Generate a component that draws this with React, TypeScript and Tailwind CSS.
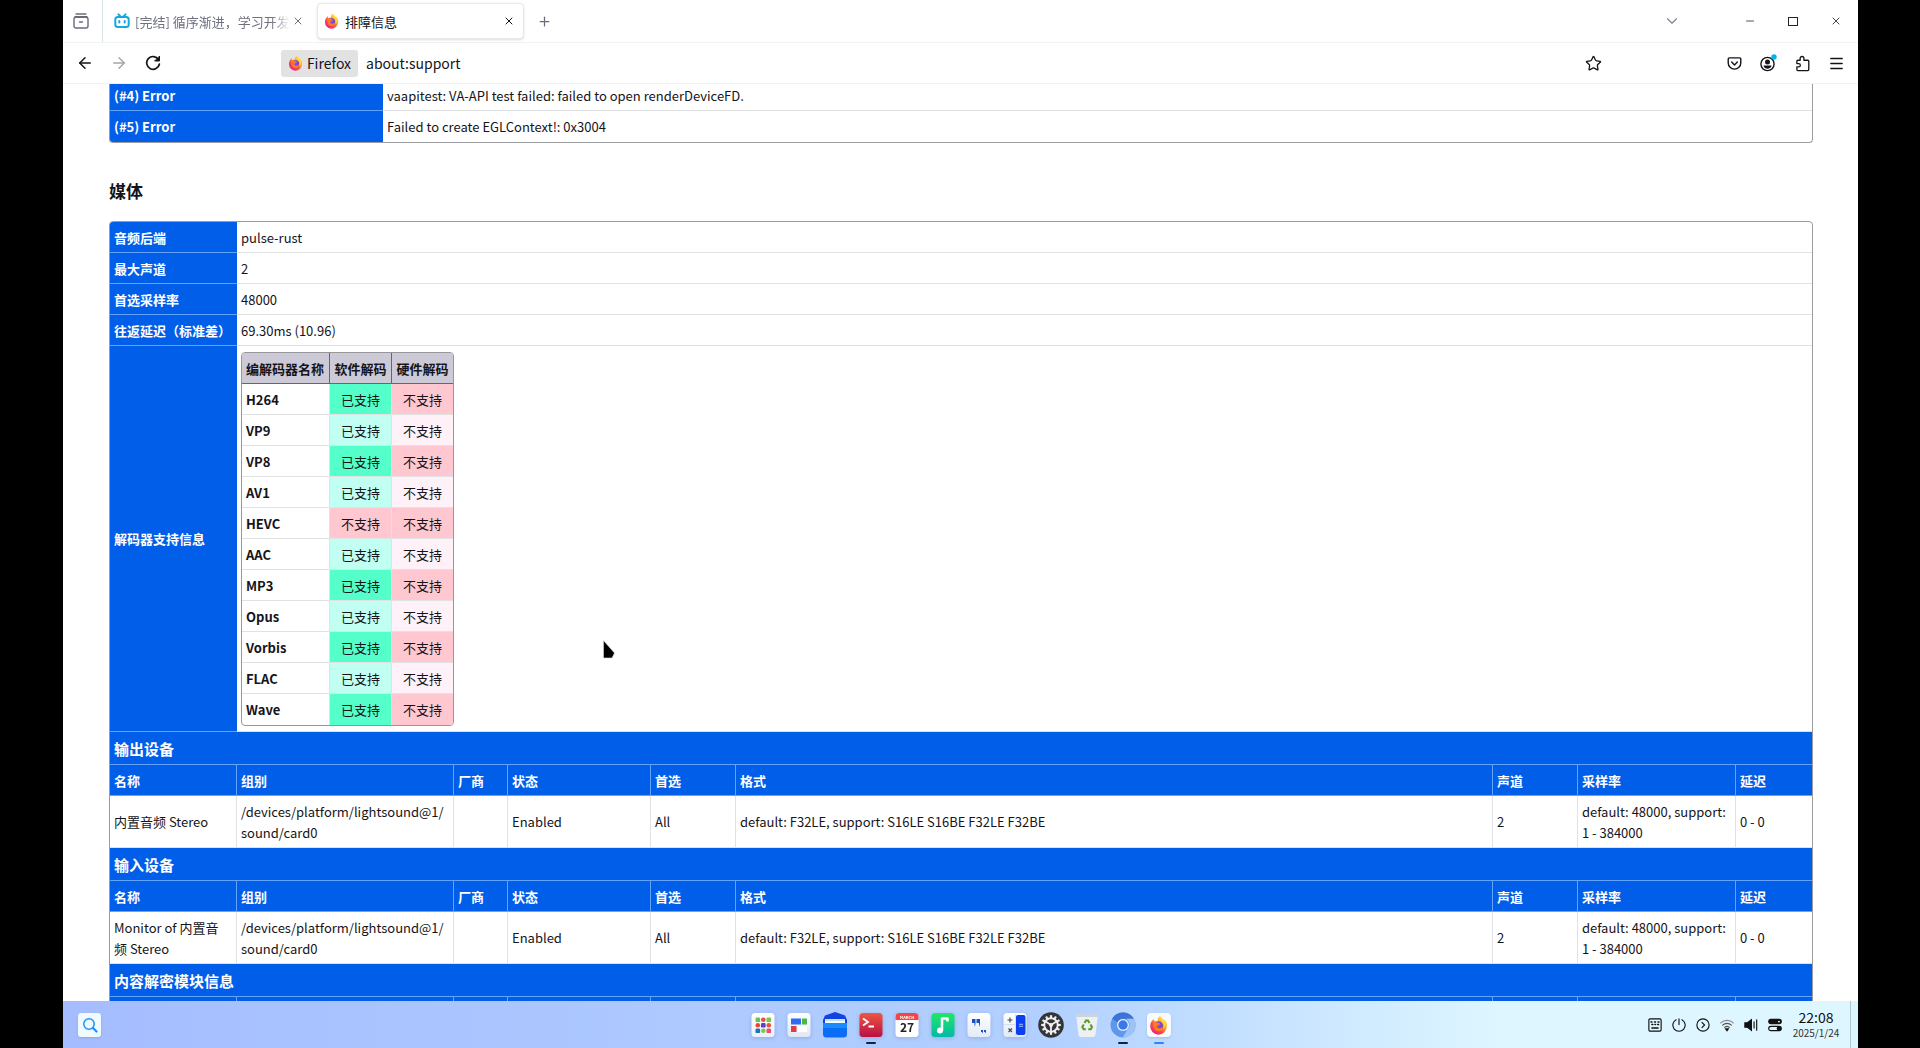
import React from "react";
import { ArrowLeft, ArrowRight, X, Plus, ChevronDown, Minus, Star, Menu } from "lucide-react";

type IconProps = { className?: string };

function FirefoxIcon({ className }: IconProps) {
  return (
    <svg viewBox="0 0 32 32" className={className} preserveAspectRatio="none" aria-hidden="true">
      <defs>
        <linearGradient id="ff-body" x1="0.85" y1="0.1" x2="0.2" y2="0.95">
          <stop offset="0" stopColor="#fff24a" />
          <stop offset="0.35" stopColor="#ffa72b" />
          <stop offset="0.65" stopColor="#ff4a45" />
          <stop offset="1" stopColor="#e8208a" />
        </linearGradient>
        <radialGradient id="ff-core" cx="0.5" cy="0.4" r="0.6">
          <stop offset="0" stopColor="#9059ff" />
          <stop offset="1" stopColor="#592acb" />
        </radialGradient>
      </defs>
      <path
        d="M30 13c-1-3-2.600-5-4.500-6.500 1 2 1.300 3.500 1.400 4.500C24.500 6 20.500 5.500 19 1c-3 2-4.500 5-4.600 8-2 .1-3.400.8-4.800 1.800C8.500 10 8.400 7.500 8.700 6.500 5.500 8 2 12 2 18a14 13.500 0 0 0 28 0c.2-1.800.3-3.500 0-5z"
        fill="url(#ff-body)"
      />
      <circle cx="16.500" cy="17.500" r="7" fill="url(#ff-core)" />
      <path d="M7 11c3-1.500 6 0 7.500 1.500 2 0 3.500.2 4 1.500-.5 1.800-4.500 1.800-5 4-.3 2 2.500 4 5.500 3 2-.7 3-2 3.500-3.500C24 23 20 27 15 26 9 25 6 19 7 11z" fill="#ff7a26" />
      <path d="M20 9c5 3 6.500 8 4 13 4-3 5-8 3-12-2-3-5-4-7-7z" fill="#ffd93b" />
    </svg>
  );
}

function BilibiliIcon() {
  return (
    <svg viewBox="0 0 16 16" className="h-4 w-4 shrink-0" fill="none" stroke="#12a8e0" strokeWidth="2" strokeLinecap="round" aria-hidden="true">
      <rect x="1.300" y="4" width="13.400" height="10" rx="2.500" />
      <path d="M4.500 1.300 6.500 3.500M11.500 1.300 9.500 3.500M5.300 8v1.600M10.700 8v1.600" />
    </svg>
  );
}

function TabListIcon() {
  return (
    <svg viewBox="0 0 16 16" className="h-4 w-4" fill="none" stroke="#6b6b7d" strokeWidth="1.400" strokeLinecap="round" aria-hidden="true">
      <path d="M3 1h10M2 3.800h12" />
      <rect x="1" y="4.200" width="14" height="10.800" rx="2" />
      <path d="M6.500 9h3" />
    </svg>
  );
}

function ReloadIcon() {
  return (
    <svg viewBox="0 0 16 16" className="h-4 w-4" fill="none" stroke="currentColor" strokeWidth="1.700" strokeLinecap="round" aria-hidden="true">
      <path d="M13.500 4.500A6.400 6.400 0 1 0 14.400 9" />
      <path d="M14.500 1.500v4.500H10z" fill="currentColor" strokeWidth="1" strokeLinejoin="round" />
    </svg>
  );
}

function PocketIcon() {
  return (
    <svg viewBox="0 0 16 16" className="h-[15px] w-[15px]" fill="none" stroke="currentColor" strokeWidth="1.500" strokeLinecap="round" strokeLinejoin="round" aria-hidden="true">
      <path d="M2.500 2h11a1.200 1.200 0 0 1 1.200 1.200V7.500a6.700 6.500 0 0 1-13.400 0V3.200A1.200 1.200 0 0 1 2.500 2z" />
      <path d="m5 6.500 3 3 3-3" />
    </svg>
  );
}

function AccountIcon() {
  return (
    <svg viewBox="0 0 18 18" className="h-[18px] w-[18px]" aria-hidden="true">
      <circle cx="8.500" cy="10" r="6.600" fill="none" stroke="#15141a" strokeWidth="1.400" />
      <circle cx="8.500" cy="8" r="2.500" fill="#15141a" />
      <path d="M4.500 11.500h8c0 2-2 3.200-4 3.200s-4-1.200-4-3.200z" fill="#15141a" />
      <circle cx="15" cy="3" r="2.700" fill="#00b3f4" />
    </svg>
  );
}

function ExtensionIcon() {
  return (
    <svg viewBox="0 0 16 18" className="h-[17px] w-[15px]" fill="none" stroke="currentColor" strokeWidth="1.400" strokeLinejoin="round" aria-hidden="true">
      <path d="M5.500 5.500V3.500a2 2 0 0 1 4 0v2h4.200a1 1 0 0 1 1 1V15.500a1 1 0 0 1-1 1H3a1 1 0 0 1-1-1v-3h2a1.700 1.700 0 0 0 0-3.400H2V6.500a1 1 0 0 1 1-1z" />
    </svg>
  );
}

function IconButton({ label, className = "", children }: { label: string; className?: string; children: React.ReactNode }) {
  return (
    <button type="button" aria-label={label} className={`flex h-7 shrink-0 items-center justify-center ${className}`}>
      {children}
    </button>
  );
}

function TabBar() {
  return (
    <header className="flex h-[43px] shrink-0 items-center border-b border-[#f0f2f3]">
      <div className="flex h-full w-10 items-center border-r border-[#d8e4e8] pl-[10px]">
        <IconButton label="标签页列表" className="w-4">
          <TabListIcon />
        </IconButton>
      </div>
      <div className="flex w-[214px] items-center pl-[11px] text-[#6f7080]">
        <button type="button" className="flex min-w-0 items-center gap-[5px]">
          <BilibiliIcon />
          <span className="w-[155px] overflow-hidden whitespace-nowrap text-left [mask-image:linear-gradient(to_right,black_88%,transparent)]">
            [完结] 循序渐进，学习开发
          </span>
        </button>
        <IconButton label="关闭标签页" className="w-4">
          <X className="h-3 w-3" strokeWidth={2} />
        </IconButton>
      </div>
      <div className="flex h-9 w-[207px] items-center justify-between rounded border border-[#e7e8ea] bg-white pl-[6px] pr-1 shadow-sm">
        <button type="button" className="flex items-center gap-[6px]">
          <FirefoxIcon className="h-4 w-[15px]" />
          <span className="text-[#15141a]">排障信息</span>
        </button>
        <IconButton label="关闭当前标签页" className="w-5">
          <X className="h-3 w-3" strokeWidth={2} />
        </IconButton>
      </div>
      <IconButton label="新建标签页" className="ml-[10px] w-5 text-[#6b6b7d]">
        <Plus className="h-[15px] w-[15px]" strokeWidth={2} />
      </IconButton>
      <div className="ml-auto flex items-center pr-[11px]">
        <IconButton label="列出所有标签页" className="mr-[56px] w-[22px] text-[#808090]">
          <ChevronDown className="h-[18px] w-[18px]" strokeWidth={1.5} />
        </IconButton>
        <IconButton label="最小化" className="mr-[21px] w-[22px] text-[#555]">
          <Minus className="h-3 w-3" strokeWidth={2} />
        </IconButton>
        <IconButton label="最大化" className="mr-[21px] w-[22px]">
          <span className="h-[9px] w-[10px] border border-[#222]" />
        </IconButton>
        <IconButton label="关闭窗口" className="w-[22px] text-[#444]">
          <X className="h-3 w-3" strokeWidth={2} />
        </IconButton>
      </div>
    </header>
  );
}

function Toolbar() {
  return (
    <nav className="flex h-[41px] shrink-0 items-center border-b border-[#f0f2f3] px-3">
      <IconButton label="后退" className="w-5">
        <ArrowLeft className="h-[18px] w-[18px]" strokeWidth={2} />
      </IconButton>
      <IconButton label="前进" className="ml-[14px] w-5 text-[#a5a5a8]">
        <ArrowRight className="h-[18px] w-[18px]" strokeWidth={2} />
      </IconButton>
      <IconButton label="重新载入" className="ml-[14px] w-5">
        <ReloadIcon />
      </IconButton>
      <div className="ml-[118px] flex min-w-0 flex-1 items-center gap-2">
        <button type="button" className="flex h-[27px] w-[77px] shrink-0 items-center justify-center gap-1 rounded-[3px] bg-[#e2e2e3] text-sm">
          <FirefoxIcon className="h-4 w-[15px]" />
          Firefox
        </button>
        <input aria-label="地址栏" defaultValue="about:support" className="min-w-0 flex-1 bg-transparent text-sm outline-none" />
      </div>
      <IconButton label="添加书签" className="w-5">
        <Star className="h-[17px] w-[17px]" strokeWidth={1.8} />
      </IconButton>
      <div className="ml-[121px] flex items-center gap-[14px]">
        <IconButton label="保存到 Pocket" className="w-5">
          <PocketIcon />
        </IconButton>
        <IconButton label="账户" className="w-5">
          <AccountIcon />
        </IconButton>
        <IconButton label="扩展" className="w-5">
          <ExtensionIcon />
        </IconButton>
        <IconButton label="打开应用程序菜单" className="w-5">
          <Menu className="h-[17px] w-[17px]" strokeWidth={2} />
        </IconButton>
      </div>
    </nav>
  );
}

const blueHead = "border-b border-[#62a3ff] bg-[#005ee9] px-1 text-left font-bold text-white";
const cell = "border-b border-[#e0e2e4]";

const failures = [
  { name: "(#4) Error", text: "vaapitest: VA-API test failed: failed to open renderDeviceFD.", size: "h-[27px] border-b pb-1" },
  { name: "(#5) Error", text: "Failed to create EGLContext!: 0x3004", size: "h-[31px]" },
];

function FailureTable() {
  return (
    <div className="overflow-hidden rounded-b border border-t-0 border-[#9b9ca0]">
      <table className="w-full table-fixed border-separate border-spacing-0">
        <colgroup>
          <col className="w-[273px]" />
          <col />
        </colgroup>
        <tbody>
          {failures.map((f) => (
            <tr key={f.name}>
              <th scope="row" className={`${f.size} border-[#62a3ff] bg-[#005ee9] px-1 text-left font-bold text-white`}>{f.name}</th>
              <td className={`${f.size} border-[#e0e2e4] px-1`}>{f.text}</td>
            </tr>
          ))}
        </tbody>
      </table>
    </div>
  );
}

const codecs: { name: string; software: boolean }[] = [
  { name: "H264", software: true },
  { name: "VP9", software: true },
  { name: "VP8", software: true },
  { name: "AV1", software: true },
  { name: "HEVC", software: false },
  { name: "AAC", software: true },
  { name: "MP3", software: true },
  { name: "Opus", software: true },
  { name: "Vorbis", software: true },
  { name: "FLAC", software: true },
  { name: "Wave", software: true },
];

function supportColor(supported: boolean, strong: boolean) {
  if (supported) return strong ? "bg-[#54ffc9]" : "bg-[#c0fff1]";
  return strong ? "bg-[#ffc8d1]" : "bg-[#fff1f8]";
}

function CodecTable() {
  return (
    <div className="w-[213px] overflow-hidden rounded border border-[#97979c]">
      <table className="w-full table-fixed border-separate border-spacing-0">
        <colgroup>
          <col className="w-[88px]" />
          <col className="w-[62px]" />
          <col />
        </colgroup>
        <thead>
          <tr className="bg-[#cccad6]">
            <th scope="col" className="h-[31px] border-b border-r border-[#66666c] px-1 text-left font-bold whitespace-nowrap">编解码器名称</th>
            <th scope="col" className="border-b border-r border-[#66666c] font-bold">软件解码</th>
            <th scope="col" className="border-b border-[#66666c] font-bold">硬件解码</th>
          </tr>
        </thead>
        <tbody>
          {codecs.map((c, i) => {
            const strong = i % 2 === 0;
            const last = i === codecs.length - 1;
            const line = last ? "border-[#e0e2e4]" : "border-b border-[#e0e2e4]";
            return (
              <tr key={c.name}>
                <th scope="row" className={`h-[31px] border-r px-1 text-left font-bold ${line}`}>{c.name}</th>
                <td className={`border-r text-center ${line} ${supportColor(c.software, strong)}`}>{c.software ? "已支持" : "不支持"}</td>
                <td className={`text-center ${line} ${supportColor(false, strong)}`}>不支持</td>
              </tr>
            );
          })}
        </tbody>
      </table>
    </div>
  );
}

const audioRows = [
  ["音频后端", "pulse-rust"],
  ["最大声道", "2"],
  ["首选采样率", "48000"],
  ["往返延迟（标准差）", "69.30ms (10.96)"],
];
const deviceColumns = ["名称", "组别", "厂商", "状态", "首选", "格式", "声道", "采样率", "延迟"];

function SectionRow({ title }: { title: string }) {
  return (
    <tr>
      <th colSpan={9} className={`${blueHead} h-[33px] text-[15px]`}>{title}</th>
    </tr>
  );
}

function ColumnRow({ columns }: { columns: string[] }) {
  return (
    <tr>
      {columns.map((c, i) => (
        <th key={i} scope="col" className={`${blueHead} h-[31px] ${i < 8 ? "border-r" : ""}`}>{c}</th>
      ))}
    </tr>
  );
}

function DeviceRow({ name }: { name: string }) {
  const values = [
    name,
    "/devices/platform/lightsound@1/sound/card0",
    "",
    "Enabled",
    "All",
    "default: F32LE, support: S16LE S16BE F32LE F32BE",
    "2",
    "default: 48000, support: 1 - 384000",
    "0 - 0",
  ];
  return (
    <tr>
      {values.map((v, i) => (
        <td key={i} className={`${cell} h-[52px] pl-1 [overflow-wrap:anywhere] ${i === 0 ? "pr-3" : "pr-1"} ${i < 8 ? "border-r" : ""}`}>{v}</td>
      ))}
    </tr>
  );
}

function MediaTable() {
  return (
    <div className="overflow-hidden rounded border border-[#9b9ca0]">
      <table className="w-full table-fixed border-separate border-spacing-0">
        <colgroup>
          <col className="w-[127px]" />
          <col className="w-[217px]" />
          <col className="w-[54px]" />
          <col className="w-[143px]" />
          <col className="w-[85px]" />
          <col />
          <col className="w-[85px]" />
          <col className="w-[158px]" />
          <col className="w-[76px]" />
        </colgroup>
        <tbody>
          {audioRows.map(([name, value]) => (
            <tr key={name}>
              <th scope="row" className={`${blueHead} h-[31px] whitespace-nowrap`}>{name}</th>
              <td colSpan={8} className={`${cell} px-1`}>{value}</td>
            </tr>
          ))}
          <tr>
            <th scope="row" className={blueHead}>解码器支持信息</th>
            <td colSpan={8} className="border-b border-[#e0e2e4] px-1 pb-[5px] pt-[6px]">
              <CodecTable />
            </td>
          </tr>
          <SectionRow title="输出设备" />
          <ColumnRow columns={deviceColumns} />
          <DeviceRow name="内置音频 Stereo" />
          <SectionRow title="输入设备" />
          <ColumnRow columns={deviceColumns} />
          <DeviceRow name="Monitor of 内置音频 Stereo" />
          <SectionRow title="内容解密模块信息" />
          <ColumnRow columns={deviceColumns.map(() => "")} />
        </tbody>
      </table>
    </div>
  );
}

function Tile({ children, from = "#ffffff", to = "#eaf1fb" }: { children?: React.ReactNode; from?: string; to?: string }) {
  const id = "tile" + from.slice(1) + to.slice(1);
  return (
    <svg viewBox="0 0 24 26" className="h-[26px] w-6 overflow-visible drop-shadow-sm" aria-hidden="true">
      <defs>
        <linearGradient id={id} x1="0" y1="0" x2="0" y2="1">
          <stop offset="0" stopColor={from} />
          <stop offset="1" stopColor={to} />
        </linearGradient>
      </defs>
      <rect x="0.500" y="1" width="23" height="24" rx="3.500" fill={`url(#${id})`} />
      {children}
    </svg>
  );
}

const launcherColors = ["#6cc24a", "#e2503c", "#7ac943", "#ef4136", "#5b3fd0", "#f04e37", "#1c75bc", "#7ac943", "#e94e77"];

const teeth = [0, 30, 60, 90, 120, 150, 180, 210, 240, 270, 300, 330];

const dock: { label: string; running?: string; icon: React.ReactNode }[] = [
  {
    label: "启动器",
    icon: (
      <Tile>
        {launcherColors.map((c, i) => (
          <rect key={i} x={4.500 + (i % 3) * 5.500} y={5.500 + Math.floor(i / 3) * 5.500} width="4.600" height="4.600" rx={i % 2 ? 2.300 : 1.200} fill={c} />
        ))}
      </Tile>
    ),
  },
  {
    label: "多任务视图",
    icon: (
      <Tile to="#dfe8f7">
        <path d="M4 6.500h10v6H4z" fill="#2e6bf0" />
        <path d="M15 6.500h5v6h-5z" fill="#4cb648" />
        <path d="M4 14h5.500v6H4z" fill="#e23d3d" />
        <path d="M10.500 14H20v6h-9.500z" fill="#fff" />
      </Tile>
    ),
  },
  {
    label: "文件管理器",
    icon: (
      <svg viewBox="0 0 24 26" className="h-[26px] w-6" aria-hidden="true">
        <path d="M0 8 2 3.500 12 0l10 3.500L24 8v4H0z" fill="#1342e0" />
        <path d="M2 7h20v5H2z" fill="#f3fbff" />
        <path d="M2 7h20v2H2z" fill="#bfe2ff" />
        <path d="M0 11h24v11a3.500 3.500 0 0 1-3.500 3.500h-17A3.500 3.500 0 0 1 0 22z" fill="#0a6df5" />
        <path d="M0 11h24v5H0z" fill="#1a8aff" />
      </svg>
    ),
  },
  {
    label: "终端",
    running: "bg-[#14233f]",
    icon: (
      <Tile from="#f0563f" to="#b80f45">
        <path d="m4 6.500 5 3.500-5 3.500M9.500 14.500h5.500" fill="none" stroke="#fff" strokeWidth="1.800" />
      </Tile>
    ),
  },
  {
    label: "日历",
    icon: (
      <Tile to="#ffffff">
        <path d="M.5 8V4.500A3.500 3.500 0 0 1 4 1h16a3.500 3.500 0 0 1 3.500 3.500V8z" fill="#f04848" />
        <text x="12" y="6.500" fontSize="4" textAnchor="middle" fill="#fff" fontWeight="700">MARCH</text>
        <text x="12" y="20" fontSize="12" textAnchor="middle" fill="#222" fontWeight="700">27</text>
      </Tile>
    ),
  },
  {
    label: "音乐",
    icon: (
      <Tile from="#1fe866" to="#05b8a8">
        <path d="M11 5.500v13M11 6.500h5.500v3" fill="none" stroke="#fff" strokeWidth="2.500" strokeLinejoin="round" />
        <circle cx="9" cy="18.500" r="3" fill="#fff" />
      </Tile>
    ),
  },
  {
    label: "输入",
    icon: (
      <Tile to="#e2ebf8">
        <path d="M5 7h3.500v4c0 2-.5 3-1 3.500V11H5zM9.500 7H13v4c0 2-.5 3-1 3.500V11H9.500z" fill="#1d4fc4" />
        <path d="M14 18h2v2l-1 1.500V20h-1zM17 18h2v2l-1 1.500V20h-1z" fill="#1d4fc4" />
      </Tile>
    ),
  },
  {
    label: "计算器",
    icon: (
      <Tile to="#dfe9f8">
        <path d="M1 12.500h12M12.500 2v22" stroke="#d5deec" />
        <path d="M4.500 8h5M7 5.500v5M5.500 16.500l3.500 3.500M9 16.500 5.500 20" stroke="#444" strokeWidth="1.100" />
        <rect x="13" y="3" width="9.500" height="20" rx="2" fill="#0b3ff0" />
        <path d="M16 12.300h4M16 14.300h4" stroke="#9fc0ff" />
      </Tile>
    ),
  },
  {
    label: "控制中心",
    icon: (
      <svg viewBox="0 0 26 26" className="h-[26px] w-[26px]" aria-hidden="true">
        <circle cx="13" cy="13" r="12.800" fill="#333539" />
        {teeth.map((a) => (
          <rect key={a} x="11.900" y="3.200" width="2.200" height="4" fill="#f0f0f0" transform={`rotate(${a} 13 13)`} />
        ))}
        <circle cx="13" cy="13" r="6.800" fill="none" stroke="#f0f0f0" strokeWidth="1.800" />
        <path d="M13 13v6.500M13 13 7.500 9.500M13 13l5.500-3.500" stroke="#f0f0f0" strokeWidth="1.800" />
        <circle cx="13" cy="13" r="2" fill="#f0f0f0" />
      </svg>
    ),
  },
  {
    label: "回收站",
    icon: (
      <svg viewBox="0 0 24 26" className="h-[26px] w-6" aria-hidden="true">
        <path d="M1 2h22l-2.500 21a2.500 2.500 0 0 1-2.500 2H6a2.500 2.500 0 0 1-2.500-2z" fill="#edf1f5" />
        <path d="M1 2h22l-.4 3H1.400z" fill="#c9d4df" />
        <path d="m9.500 11 1.500-2.500h2l1.500 2.500M15.500 12.500l1.500 2.500-1.200 2.200h-2.500M10.800 17.200H8.700L7.300 15l1.500-2.500" fill="none" stroke="#5c9a1b" strokeWidth="2" />
      </svg>
    ),
  },
  {
    label: "浏览器",
    running: "bg-[#14233f]",
    icon: (
      <svg viewBox="0 0 26 26" className="h-[26px] w-[26px]" aria-hidden="true">
        <circle cx="13" cy="13" r="12.500" fill="#5f97ea" />
        <path d="M2.200 6.700A12.500 12.500 0 0 1 23.900 6.800H13A6.200 6.200 0 0 0 7.400 10.200z" fill="#3d72d6" />
        <path d="M23.900 6.800A12.500 12.500 0 0 1 12.500 25.500L18.300 16.200A6.200 6.200 0 0 0 16 6.800z" fill="#9cc3f8" />
        <circle cx="13" cy="13" r="6" fill="#e6f1ff" />
        <circle cx="13" cy="13" r="4.700" fill="#3a78e8" />
      </svg>
    ),
  },
  {
    label: "火狐浏览器",
    running: "bg-[#2f86f6]",
    icon: (
      <span className="flex h-6 w-6 items-center justify-center rounded bg-[#f8fafc] shadow-sm">
        <FirefoxIcon className="h-5 w-[19px]" />
      </span>
    ),
  },
];

function TrayIcon({ label, children }: { label: string; children: React.ReactNode }) {
  return (
    <button type="button" aria-label={label} className="flex h-6 w-[14px] items-center justify-center">
      <svg viewBox="0 0 16 16" className="h-[14px] w-[14px]" fill="none" stroke="#111" strokeWidth="1.300" strokeLinecap="round">
        {children}
      </svg>
    </button>
  );
}

function Taskbar() {
  return (
    <footer className="grid h-[47px] shrink-0 grid-cols-[1fr_auto_1fr] items-center bg-linear-to-r from-[#a5bdff] via-[#b2d0ff] via-55% to-[#def6ff] to-80%">
      <button type="button" aria-label="搜索" className="ml-[15px] flex h-6 w-[23px] items-center justify-center rounded-[3px] bg-[#f0fbff] shadow-sm">
        <svg viewBox="0 0 16 16" className="h-4 w-4" fill="none" stroke="#1c94f5" strokeWidth="1.500" strokeLinecap="round" aria-hidden="true">
          <circle cx="7" cy="7" r="5.200" />
          <path d="m11 11 3.500 3.500" strokeWidth="2.200" />
        </svg>
      </button>
      <div className="flex gap-[10px]">
        {dock.map((d) => (
          <button key={d.label} type="button" aria-label={d.label} className="relative flex h-[47px] w-[26px] items-center justify-center">
            {d.icon}
            {d.running && <span className={`absolute bottom-1 left-2 h-[2px] w-[10px] rounded ${d.running}`} />}
          </button>
        ))}
      </div>
      <div className="flex h-full items-center justify-end gap-[10px]">
        <TrayIcon label="输入法">
          <rect x="1" y="1" width="14" height="14" rx="1.500" />
          <path d="M3.500 4.500h1M7.500 4.500h1M11.500 4.500h1M4.500 7.500h1M8 7.500h.5M11 7.500h1M4.500 11.500h7" strokeWidth="1.800" />
        </TrayIcon>
        <TrayIcon label="电源">
          <path d="M4.700 2a7 7 0 1 0 6.600 0M8 .8V7.500" />
        </TrayIcon>
        <TrayIcon label="展开托盘">
          <circle cx="8" cy="8" r="7" />
          <path d="m6.800 5 3 3-3 3" />
        </TrayIcon>
        <TrayIcon label="无线网络">
          <path d="M.8 5.500a10.500 10.500 0 0 1 14.400 0" stroke="#888" />
          <path d="M3 8.200a7.300 7.300 0 0 1 10 0M5.300 10.800a4 4 0 0 1 5.400 0" stroke="#555" />
          <path d="M6.500 12.500 8 14.500l1.500-2z" fill="#111" />
        </TrayIcon>
        <TrayIcon label="音量">
          <path d="M1 5.500h3L8.500 2v12L4 10.500H1z" fill="#111" />
          <path d="M11.500 4.500v7M14.500 2v12" />
        </TrayIcon>
        <TrayIcon label="快捷设置">
          <rect x=".8" y="1.500" width="14.400" height="5" rx="2.500" fill="#111" />
          <circle cx="12.500" cy="4" r="1" fill="#fff" stroke="none" />
          <rect x=".8" y="9.500" width="14.400" height="5" rx="2.500" />
          <circle cx="12.500" cy="12" r="2" fill="#111" />
        </TrayIcon>
        <button type="button" className="flex w-12 flex-col items-center whitespace-nowrap text-[#111]">
          <span className="text-sm leading-4">22:08</span>
          <span className="text-[10px] leading-4 text-[#333]">2025/1/24</span>
        </button>
        <span className="h-full w-2 border-l border-[#b3c5cd]" />
      </div>
    </footer>
  );
}

export default function App() {
  return (
    <div className="h-screen overflow-hidden bg-black pl-[63px] pr-[62px] font-['Noto_Sans_CJK_SC',sans-serif] text-[13px] leading-[21px] text-[#15141a]">
      <div className="relative flex h-full flex-col bg-white">
        <TabBar />
        <Toolbar />
        <main className="min-h-0 flex-1 overflow-hidden pl-[46px] pr-[45px]">
          <FailureTable />
          <h2 className="pb-[18px] pt-9 text-[17px] font-bold leading-6">媒体</h2>
          <MediaTable />
        </main>
        <Taskbar />
        <svg viewBox="0 0 12 20" className="absolute left-[540px] top-[640px] h-5 w-3" aria-hidden="true">
          <path d="M.5.500 11.500 13 9 18H.5z" fill="#000" stroke="#ddd" strokeWidth=".6" />
        </svg>
      </div>
    </div>
  );
}
